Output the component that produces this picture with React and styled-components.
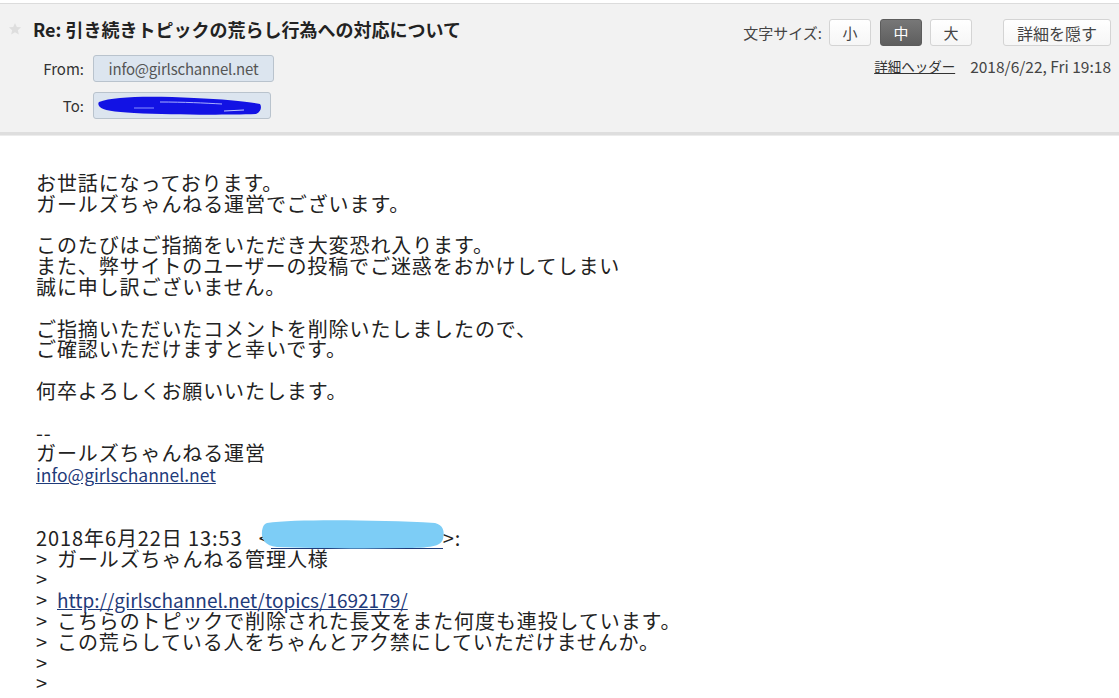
import React from "react";
import styled, { createGlobalStyle } from "styled-components";

const Global = createGlobalStyle`
  html, body { margin: 0; padding: 0; background: #fff; }
  body { font-family: "Noto Sans CJK JP", "Noto Sans", sans-serif; color: #222; }
`;

const Page = styled.div`
  width: 1119px;
  height: 698px;
  overflow: hidden;
  background: #fff;
  padding-top: 3px;
  box-sizing: border-box;
`;

const Header = styled.header`
  display: flex;
  justify-content: space-between;
  background: #f2f2f2;
  border-top: 1px solid #dcdcdc;
  border-bottom: 3px solid #dedede;
  box-shadow: 0 1px 0 #ececec;
  padding: 12px 8px 13px 8px;
`;

const LeftCol = styled.div`
  display: flex;
  flex-direction: column;
`;

const TitleRow = styled.div`
  display: flex;
  align-items: center;
  height: 26px;
  gap: 11px;
`;

const Title = styled.h1`
  margin: 0;
  font-size: 18px;
  font-weight: 700;
  color: #222;
  letter-spacing: 0;
`;

const AddrRow = styled.div`
  display: flex;
  align-items: center;
  margin-top: ${(p) => p.$top}px;
`;

const AddrLabel = styled.span`
  width: 76px;
  text-align: right;
  margin-right: 9px;
  font-size: 15px;
  color: #333;
`;

const AddrBox = styled.span`
  position: relative;
  display: inline-flex;
  align-items: center;
  justify-content: center;
  box-sizing: border-box;
  width: ${(p) => p.$w}px;
  height: 27px;
  background: #dce5ef;
  border: 1px solid #b9c3cd;
  border-radius: 3px;
  font-size: 15px;
  color: #555;
  letter-spacing: -0.2px;
`;

const Scribble = styled.svg`
  position: absolute;
  left: 0;
  top: 0;
  pointer-events: none;
`;

const RightCol = styled.div`
  display: flex;
  flex-direction: column;
  align-items: flex-end;
  padding-top: 3px;
`;

const SizeRow = styled.div`
  display: flex;
  align-items: center;
  height: 27px;
`;

const SizeLabel = styled.span`
  font-size: 15px;
  color: #444;
  margin-right: 7px;
`;

const SizeBtn = styled.button`
  box-sizing: border-box;
  width: ${(p) => p.$w || 42}px;
  height: 27px;
  margin-left: ${(p) => p.$ml || 0}px;
  border: 1px solid ${(p) => (p.$active ? "#5c5c5c" : "#d4d4d4")};
  border-radius: 3px;
  background: ${(p) =>
    p.$active ? "linear-gradient(#777, #5e5e5e)" : "linear-gradient(#fff, #f6f6f6)"};
  color: ${(p) => (p.$active ? "#fff" : "#444")};
  font-family: "Noto Sans CJK JP", sans-serif;
  font-size: ${(p) => p.$fs || 15}px;
  padding: 0;
  cursor: pointer;
`;

const MetaRow = styled.div`
  display: flex;
  align-items: center;
  margin-top: 9px;
  gap: 15px;
  font-size: 15.5px;
  color: #444;
`;

const MetaLink = styled.a`
  color: #333;
  text-decoration: underline;
  font-size: 13.5px;
`;

const Body = styled.main`
  padding: 38px 36px 0 36px;
  font-size: 20px;
  letter-spacing: 0.9px;
  line-height: 20.8px;
  color: #222;
`;

const Line = styled.div`
  min-height: 20.8px;
  white-space: pre;
`;

const MailLink = styled.a`
  color: #1f3b7a;
  text-decoration: underline;
  letter-spacing: 0;
  font-size: ${(p) => p.$fs}px;
`;

const QuoteLine = styled.div`
  display: flex;
  min-height: 20.8px;
  white-space: pre;
`;

const QuoteMark = styled.span`
  width: 21px;
  flex: none;
`;

const Redacted = styled.span`
  position: relative;
  display: inline-block;
`;

const HiddenLink = styled.span`
  display: inline-block;
  width: 172px;
  border-bottom: 1px solid #1f3b7a;
  height: 17px;
  vertical-align: -3px;
`;

function Star() {
  return (
    <svg width="14" height="14" viewBox="0 0 24 24">
      <path
        d="M12 1.5l3.1 7.1 7.4.6-5.6 4.9 1.7 7.4L12 17.6l-6.6 3.9 1.7-7.4-5.6-4.9 7.4-.6z"
        fill="#dedede"
      />
    </svg>
  );
}

function Quote({ children }) {
  return (
    <QuoteLine>
      <QuoteMark>&gt;</QuoteMark>
      <span>{children}</span>
    </QuoteLine>
  );
}

export default function App() {
  return (
    <Page>
      <Global />
      <Header>
        <LeftCol>
          <TitleRow>
            <Star />
            <Title>Re: 引き続きトピックの荒らし行為への対応について</Title>
          </TitleRow>
          <AddrRow $top={13}>
            <AddrLabel>From:</AddrLabel>
            <AddrBox $w={181}>info@girlschannel.net</AddrBox>
          </AddrRow>
          <AddrRow $top={10}>
            <AddrLabel>To:</AddrLabel>
            <AddrBox $w={178}>
              <Scribble width="178" height="27" viewBox="0 0 178 27">
                <path
                  d="M5 9 C 20 3, 60 3, 100 5 C 130 6, 155 9, 166 11 C 168 14, 167 19, 162 21 C 130 22, 80 22, 40 20 C 20 19, 8 17, 6 14 C 4 12, 4 10, 5 9 Z"
                  fill="#1212e4"
                />
                <path d="M66 9 C 90 9, 110 10, 128 11" stroke="#a8b0ff" strokeWidth="1" fill="none" />
                <path d="M130 18 L 150 17" stroke="#c0c6ff" strokeWidth="1.2" fill="none" />
                <path d="M40 15 L 60 15" stroke="#8890ff" strokeWidth="1" fill="none" />
              </Scribble>
            </AddrBox>
          </AddrRow>
        </LeftCol>
        <RightCol>
          <SizeRow>
            <SizeLabel>文字サイズ:</SizeLabel>
            <SizeBtn>小</SizeBtn>
            <SizeBtn $ml={9} $active>
              中
            </SizeBtn>
            <SizeBtn $ml={8}>大</SizeBtn>
            <SizeBtn $ml={31} $w={108} $fs={16}>
              詳細を隠す
            </SizeBtn>
          </SizeRow>
          <MetaRow>
            <MetaLink href="#">詳細ヘッダー</MetaLink>
            <span>2018/6/22, Fri 19:18</span>
          </MetaRow>
        </RightCol>
      </Header>
      <Body>
        <Line>お世話になっております。</Line>
        <Line>ガールズちゃんねる運営でございます。</Line>
        <Line />
        <Line>このたびはご指摘をいただき大変恐れ入ります。</Line>
        <Line>また、弊サイトのユーザーの投稿でご迷惑をおかけしてしまい</Line>
        <Line>誠に申し訳ございません。</Line>
        <Line />
        <Line>ご指摘いただいたコメントを削除いたしましたので、</Line>
        <Line>ご確認いただけますと幸いです。</Line>
        <Line />
        <Line>何卒よろしくお願いいたします。</Line>
        <Line />
        <Line>--</Line>
        <Line>ガールズちゃんねる運営</Line>
        <Line>
          <MailLink href="#" $fs={17.5}>
            info@girlschannel.net
          </MailLink>
        </Line>
        <Line />
        <Line />
        <Line>
          2018年6月22日 13:53{"   "}&lt;
          <Redacted>
            <HiddenLink />
            <Scribble width="192" height="36" viewBox="0 0 192 36" style={{ left: -14, top: -11 }}>
              <path
                d="M10 6 C 40 2, 120 3, 178 6 C 186 8, 188 14, 186 22 C 184 28, 178 31, 150 31 C 100 32, 50 31, 20 30 C 8 29, 4 22, 5 14 C 6 9, 7 7, 10 6 Z"
                fill="#7dcdf6"
              />
            </Scribble>
          </Redacted>
          &gt;:
        </Line>
        <Quote>ガールズちゃんねる管理人様</Quote>
        <Quote />
        <Quote>
          <MailLink href="#" $fs={19}>
            http://girlschannel.net/topics/1692179/
          </MailLink>
        </Quote>
        <Quote>こちらのトピックで削除された長文をまた何度も連投しています。</Quote>
        <Quote>この荒らしている人をちゃんとアク禁にしていただけませんか。</Quote>
        <Quote />
        <Quote />
      </Body>
    </Page>
  );
}
